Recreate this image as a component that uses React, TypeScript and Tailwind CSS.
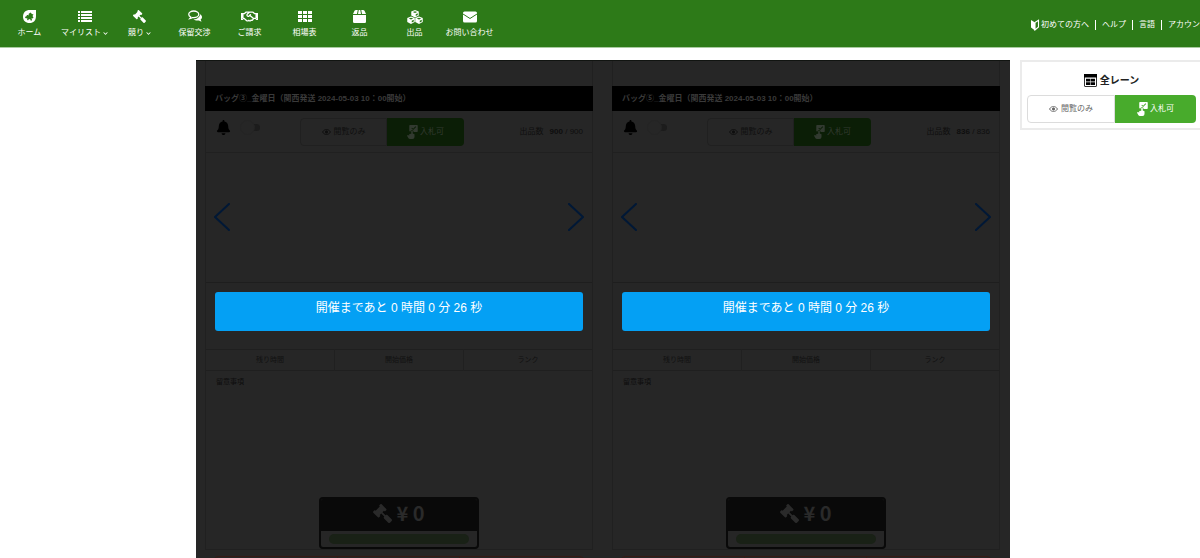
import React from 'react';
import { FaBell, FaChevronDown, FaGavel, FaRegHandshake } from 'react-icons/fa';

interface Lane {
  id: string;
  title: string;
  remaining: number;
  total: number;
}

const LANES: Lane[] = [
  { id: 'lane-3', title: 'バッグ③_金曜日（関西発送 2024-05-03 10：00開始）', remaining: 900, total: 900 },
  { id: 'lane-5', title: 'バッグ⑤_金曜日（関西発送 2024-05-03 10：00開始）', remaining: 836, total: 836 },
];

const HomeIcon = () => (
  <svg width="13" height="13" viewBox="0 0 26 26" aria-hidden="true">
    <path d="M26 0v12c0 9-5 14-13 14S0 21 0 13.500C0 5 5 0 14 0z" fill="#fff" />
    <path d="M15 5l3 3 3 1-2 3 2 3-2 2-2-1 1 4-2 2-2-4-3 1-1 2-2-2 1-2-5-1 1-3 3-1-1-2 3 0 2 1-1-3z" fill="#2d7a18" />
  </svg>
);

const ListIcon = () => (
  <svg width="14" height="12" viewBox="0 0 14 12" fill="#fff" aria-hidden="true">
    <path d="M0 0h2v2H0zM3 0h11v2H3zM0 3h2v2H0zM3 3h11v2H3zM0 6h2v2H0zM3 6h11v2H3zM0 9h2v2H0zM3 9h11v2H3z" />
  </svg>
);

const GavelIcon = ({ size = 13 }: { size?: number }) => <FaGavel size={size} className="-scale-x-100" />;

const ChatIcon = () => (
  <svg width="14" height="13" viewBox="0 0 28 26" aria-hidden="true">
    <path d="M24 8.500c2.500 1.300 4 3.300 4 5.700 0 2-1 3.700-2.700 5 .3 1.400 1 2.500 2 3.600-2 0-3.800-.7-5.300-2-4 .9-8.500.2-11-2.300 7 .2 13-4 13-10z" fill="#fff" />
    <path d="M11.500 2C6 2 1.500 4.900 1.500 8.700c0 2.300 1.500 4.200 4 5.400-.3 1.200-1 2.300-2 3.300 2.200-.2 4.200-1 5.800-2.200.7.1 1.500.2 2.200.2 5.500 0 10-3 10-6.700S17 2 11.500 2z" fill="#2d7a18" stroke="#fff" strokeWidth="2.600" />
  </svg>
);

const HandshakeIcon = () => <FaRegHandshake size={17} />;

const GridIcon = () => (
  <svg width="14" height="12" viewBox="0 0 14 12" fill="#fff" aria-hidden="true">
    <path d="M0 0h4v3H0zM5 0h4v3H5zM10 0h4v3h-4zM0 4h4v3H0zM5 4h4v3H5zM10 4h4v3h-4zM0 8h4v3H0zM5 8h4v3H5zM10 8h4v3h-4z" />
  </svg>
);

const BoxIcon = () => (
  <svg width="13" height="13" viewBox="0 0 26 26" fill="#fff" aria-hidden="true">
    <path d="M6 0h3.500L8 8H0l3-6.500Q4 0 6 0zM11.500 0h3L16 8h-6zM16.500 0H20q2 0 3 1.500L26 8h-8zM0 10h26v13.500a2.500 2.500 0 0 1-2.500 2.500h-21A2.500 2.500 0 0 1 0 23.500z" />
  </svg>
);

const Cube = ({ x, y }: { x: number; y: number }) => (
  <g transform={`translate(${x} ${y})`}>
    <path d="M8 0l7.500 3v8L8 15 .5 11V3z" fill="#fff" />
    <path d="M3.500 4L8 2.300 12.500 4 8 6z" fill="#2d7a18" />
    <path d="M9.500 8.500l4-2V10l-4 2.200z" fill="#2d7a18" />
  </g>
);

const CubesIcon = () => (
  <svg width="16" height="14" viewBox="0 0 32 28" aria-hidden="true">
    <Cube x={8} y={0} />
    <Cube x={0} y={13} />
    <Cube x={16} y={13} />
  </svg>
);

const MailIcon = () => (
  <svg width="14" height="12" viewBox="0 0 28 24" aria-hidden="true">
    <rect y="1" width="28" height="22" rx="3" fill="#fff" />
    <path d="M0 6l14 9 14-9" fill="none" stroke="#2d7a18" strokeWidth="2" />
  </svg>
);

const BeginnerIcon = () => (
  <svg width="10" height="12" viewBox="0 0 20 24" aria-hidden="true">
    <path d="M2 2l8 5v16l-8-6z" fill="#fff" />
    <path d="M10 7l7-4.500v13.500l-7 6z" fill="none" stroke="#fff" strokeWidth="2.200" />
  </svg>
);

const LanesIcon = () => (
  <svg width="13" height="13" viewBox="0 0 26 26" aria-hidden="true">
    <rect x="1" y="1" width="24" height="24" rx="1" fill="#fff" stroke="#333" strokeWidth="2" />
    <path d="M0 0h26v7H0z" fill="#000" />
    <path d="M4 9.500h8.500v5.500H4zM13.500 9.500H22v5.500h-8.500zM4 16.500h8.500V22H4zM13.500 16.500H22V22h-8.500z" fill="#000" />
  </svg>
);

const EyeIcon = () => (
  <svg width="9" height="6" viewBox="0 0 18 12" fill="none" stroke="currentColor" strokeWidth="1.800" aria-hidden="true">
    <path d="M1 6c2-3.300 4.800-5 8-5s6 1.700 8 5c-2 3.300-4.800 5-8 5S3 9.300 1 6z" />
    <circle cx="9" cy="6" r="2.300" fill="currentColor" />
  </svg>
);

// Ticked box with a pointing hand below its left corner
const TouchIcon = () => (
  <svg width="11" height="14" viewBox="0 0 22 28" fill="currentColor" aria-hidden="true">
    <path
      fillRule="evenodd"
      d="M6 0h14a1.500 1.500 0 0 1 1.500 1.500v11a1.500 1.500 0 0 1-1.500 1.500h-7v-1a3 3 0 0 0-6 0H6a1.500 1.500 0 0 1-1.500-1.500v-10A1.500 1.500 0 0 1 6 0zm6.200 7.600L10 5.400 8.700 6.700l3.500 3.500 6.200-6.200-1.400-1.400z"
    />
    <path d="M8.500 12.500a1.500 1.500 0 0 1 3 0V17l3.500 1.500V24a4 4 0 0 1-4 4H5.500a3 3 0 0 1-2.200-1L0 21.500 1.500 20l3 1v-3l4-.5z" />
  </svg>
);

const NAV_ITEMS: { label: string; icon: React.FC; menu?: boolean }[] = [
  { label: 'ホーム', icon: HomeIcon },
  { label: 'マイリスト', icon: ListIcon, menu: true },
  { label: '競り', icon: GavelIcon, menu: true },
  { label: '保留交渉', icon: ChatIcon },
  { label: 'ご請求', icon: HandshakeIcon },
  { label: '相場表', icon: GridIcon },
  { label: '返品', icon: BoxIcon },
  { label: '出品', icon: CubesIcon },
  { label: 'お問い合わせ', icon: MailIcon },
];

const Header = () => (
  <header className="flex h-12 shrink-0 items-start justify-between border-b border-[#a9cba0] bg-[#2d7a18] text-[8px] text-white">
    <nav className="flex pl-[2px] pt-2">
      {NAV_ITEMS.map(({ label, icon: Icon, menu }) => (
        <a key={label} href="#" className="flex w-[55px] flex-col items-center whitespace-nowrap">
          <span className="flex h-[17px] items-center">
            <Icon />
          </span>
          <span className="flex items-center gap-0.5 leading-4">
            {label}
            {menu && <FaChevronDown size={5} />}
          </span>
        </a>
      ))}
    </nav>
    <div className="flex items-center whitespace-nowrap pt-[18px] leading-[14px]">
      <a href="#" className="flex items-center gap-px pr-1.5">
        <BeginnerIcon />
        初めての方へ
      </a>
      <span className="h-[10px] w-px bg-white" />
      <a href="#" className="px-1.5">ヘルプ</a>
      <span className="h-[10px] w-px bg-white" />
      <a href="#" className="px-1.5">言語</a>
      <span className="h-[10px] w-px bg-white" />
      <a href="#" className="pl-1.5">アカウン</a>
    </div>
  </header>
);

const LaneCard: React.FC<{ lane: Lane }> = ({ lane }) => (
  <section className="flex min-w-0 flex-1 flex-col">
    <div className="border-x border-b border-[#202020] pt-[25px]">
      <h2 className="-mx-px h-[25px] bg-black px-[10px] text-[8px] font-bold leading-[25px] text-[#3a3a3a]">
        {lane.title}
      </h2>

      <div className="flex h-[42px] items-start border-b border-[#202020] pl-[10px] pr-[9px] pt-[7px] text-[8px]">
        <div className="flex w-[84px] items-center gap-[13px] pt-0.5">
          <FaBell size={15} className="text-black" />
          <input
            type="checkbox"
            role="switch"
            aria-label="通知"
            className="relative h-[7px] w-4 appearance-none rounded-full bg-[#1c1c1c] before:absolute before:-left-1 before:-top-1 before:size-[15px] before:rounded-full before:border before:border-[#242424] before:bg-[#262626]"
          />
        </div>
        <div className="flex h-7 w-[164px]">
          <button className="flex flex-1 items-center justify-center gap-[3px] rounded-l-sm border border-[#202020] text-[#0f0f0f]">
            <EyeIcon />
            閲覧のみ
          </button>
          <button className="flex w-[77px] items-center justify-center gap-0.5 rounded-r-sm bg-[#0b1e06] text-[#323a30]">
            <TouchIcon />
            入札可
          </button>
        </div>
        <p className="flex flex-1 justify-end gap-1.5 leading-7 text-[#0e0e0e]">
          <span>出品数</span>
          <span>
            <b>{lane.remaining}</b> / {lane.total}
          </span>
        </p>
      </div>

      <div className="flex h-[130px] items-center justify-between border-b border-[#1e1e1e] px-2 pb-0.5 text-[#001836]">
        <button aria-label="前へ">
          <svg width="16" height="28" viewBox="0 0 16 28" fill="none" stroke="currentColor" strokeWidth="2" strokeLinecap="round" strokeLinejoin="round">
            <path d="M15 1L1 14l14 13" />
          </svg>
        </button>
        <button aria-label="次へ">
          <svg width="16" height="28" viewBox="0 0 16 28" fill="none" stroke="currentColor" strokeWidth="2" strokeLinecap="round" strokeLinejoin="round">
            <path d="M1 1l14 13L1 27" />
          </svg>
        </button>
      </div>

      <div className="px-[9px] pb-[18px] pt-[9px]">
        <button className="flex h-[39px] w-full justify-center rounded-[3px] bg-[#04a0f4] pt-1.5 text-[12px] leading-5 text-white">
          開催まであと 0 時間 0 分 26 秒
        </button>
      </div>

      <table className="w-full table-fixed border-y border-[#1f1f1f] text-[7px] text-[#111]">
        <thead>
          <tr className="h-[21px] divide-x divide-[#202020]">
            <th className="p-0 font-normal">残り時間</th>
            <th className="p-0 font-normal">開始価格</th>
            <th className="p-0 font-normal">ランク</th>
          </tr>
        </thead>
      </table>

      <div className="flex h-[126px] px-[10px] pt-1 text-[7px] leading-[14px] text-[#0d0d0d]">
        留意事項
      </div>

      <div className="mx-auto w-40 overflow-hidden rounded border-2 border-[#090909]">
        <div className="flex h-8 items-center justify-center gap-1 bg-[#090909] pb-1 font-['Noto_Sans_CJK_JP',sans-serif] text-[20px] font-bold leading-7 text-[#2a2a2a]">
          <GavelIcon size={19} />
          <span>¥ 0</span>
        </div>
        <div className="px-2 py-[3px]">
          <div className="h-[10px] rounded-full bg-[#192116]" />
        </div>
      </div>
    </div>

    <div className="px-[9px] pt-1.5">
      <div className="grid h-10 grid-cols-3 divide-x divide-[#361b16] rounded-t-sm border border-[#361b16]">
        <span />
        <span />
        <span />
      </div>
    </div>
  </section>
);

const LaneFilter = () => (
  <aside className="mt-3 w-[180px] shrink-0 self-start border-2 border-r-0 border-[#ebebeb] bg-white pb-[5px] pl-[5px] pr-1 pt-1.5">
    <h2 className="flex h-[27px] items-center justify-center gap-[3px] pb-0.5 text-[10px] font-bold text-[#222]">
      <LanesIcon />
      全レーン
    </h2>
    <div className="flex h-7 text-[8px]">
      <button className="flex flex-1 items-center justify-center gap-[3px] rounded-l-sm border border-[#dcdcdc] text-[#666]">
        <EyeIcon />
        閲覧のみ
      </button>
      <button className="flex w-[81px] items-center justify-center gap-0.5 rounded-r-sm bg-[#48ab2c] text-white">
        <TouchIcon />
        入札可
      </button>
    </div>
  </aside>
);

export default function App() {
  return (
    <div className="flex h-screen flex-col overflow-hidden bg-white font-['Liberation_Sans','Noto_Sans_CJK_JP',sans-serif]">
      <Header />
      <div className="flex min-h-0 flex-1 gap-[10px] pl-[196px]">
        <main className="mt-3 flex min-w-0 flex-1 gap-[19px] overflow-hidden border-t border-[#111411] bg-[#262626] pl-[9px] pr-[10px]">
          {LANES.map((lane) => (
            <LaneCard key={lane.id} lane={lane} />
          ))}
        </main>
        <LaneFilter />
      </div>
    </div>
  );
}
